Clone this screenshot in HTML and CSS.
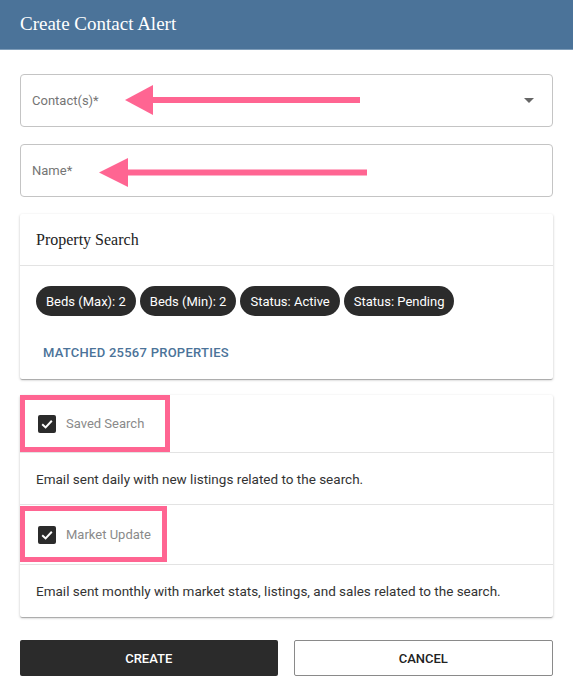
FILE: index.html
```html
<!DOCTYPE html>
<html>
<head>
<meta charset="utf-8">
<link rel="stylesheet" href="styles.css">
</head>
<body>
<header class="topbar"><h1 class="title">Create Contact Alert</h1></header>
<main class="content">
  <div class="field">
    <span class="field-label">Contact(s)*</span>
    <span class="caret"></span>
    <svg class="arrow arrow-contact" width="235" height="30" viewBox="0 0 235 30"><polygon points="0,15 28,0 28,30" fill="#ff6592"/><rect x="27" y="12" width="208" height="6" fill="#ff6592"/></svg>
  </div>
  <div class="field">
    <span class="field-label">Name*</span>
    <svg class="arrow arrow-name" width="268" height="29" viewBox="0 0 268 29"><polygon points="0,14.5 29,0 29,29" fill="#ff6592"/><rect x="28" y="11.5" width="240" height="6" fill="#ff6592"/></svg>
  </div>
  <section class="card">
    <div class="card-head">Property Search</div>
    <div class="card-body">
      <div class="chips">
        <span class="chip">Beds (Max): 2</span>
        <span class="chip">Beds (Min): 2</span>
        <span class="chip">Status: Active</span>
        <span class="chip">Status: Pending</span>
      </div>
      <div class="matched">MATCHED 25567 PROPERTIES</div>
    </div>
  </section>
  <section class="card">
    <div class="check-row">
      <span class="checkbox"><svg width="18" height="18" viewBox="0 0 18 18"><path d="M4.2 9.2 L7.6 12.4 L13.8 5.8" fill="none" stroke="#fff" stroke-width="2"/></svg></span>
      <span class="check-label">Saved Search</span>
      <span class="highlight hl-1"></span>
    </div>
    <div class="desc">Email sent daily with new listings related to the search.</div>
    <div class="check-row row-2">
      <span class="checkbox"><svg width="18" height="18" viewBox="0 0 18 18"><path d="M4.2 9.2 L7.6 12.4 L13.8 5.8" fill="none" stroke="#fff" stroke-width="2"/></svg></span>
      <span class="check-label">Market Update</span>
      <span class="highlight hl-2"></span>
    </div>
    <div class="desc last">Email sent monthly with market stats, listings, and sales related to the search.</div>
  </section>
  <div class="actions">
    <button class="btn btn-primary">CREATE</button>
    <button class="btn btn-outline">CANCEL</button>
  </div>
</main>
</body>
</html>
```

FILE: styles.css
```css
* { box-sizing: border-box; }
html, body { margin: 0; padding: 0; background: #fff; }
body { font-family: Roboto, "Liberation Sans", sans-serif; color: #333; width: 573px; }

.topbar {
  height: 50px;
  background: #4b7399;
  border-bottom: 1px solid #7f9db9;
  display: flex;
  align-items: center;
  padding-left: 20px;
}
.title {
  margin: 0;
  font-family: "Liberation Serif", "DejaVu Serif", serif;
  font-weight: normal;
  font-size: 19px;
  color: #fff;
  position: relative;
  top: -1px;
}

.content {
  padding: 24px 20px 0 20px;
  display: flex;
  flex-direction: column;
}

.field {
  position: relative;
  height: 53px;
  border: 1px solid #c4c4c4;
  border-radius: 4px;
  display: flex;
  align-items: center;
  padding: 0 11px;
  margin-bottom: 17px;
}
.field-label { font-size: 13px; color: #757575; }
.caret {
  margin-left: auto;
  margin-right: 7px;
  width: 0; height: 0;
  border-left: 5px solid transparent;
  border-right: 5px solid transparent;
  border-top: 5px solid #666;
}
.arrow { position: absolute; }
.arrow-contact { left: 104px; top: 10px; }
.arrow-name { left: 78px; top: 13px; }

.card {
  background: #fff;
  border-radius: 2px;
  box-shadow: 0 1px 3px rgba(0,0,0,0.2), 0 1px 1px rgba(0,0,0,0.14), 0 2px 1px -1px rgba(0,0,0,0.12);
  margin-bottom: 16px;
}
.card-head {
  height: 52px;
  display: flex;
  align-items: center;
  padding-left: 16px;
  font-family: "Liberation Serif", "DejaVu Serif", serif;
  font-size: 16px;
  color: #222;
  border-bottom: 1px solid #e3e3e3;
}
.card-body { padding: 20px 16px 12px 16px; }
.chips { display: flex; gap: 4px; }
.chip {
  height: 30px;
  border-radius: 15px;
  background: #2b2b2b;
  color: #fff;
  font-size: 13px;
  display: flex;
  align-items: center;
  padding: 0 10px;
}
.matched {
  margin-top: 23px;
  padding-left: 7px;
  font-size: 13px;
  font-weight: 500;
  letter-spacing: 0.02em;
  color: #4b7399;
  line-height: 28px;
}

.check-row {
  position: relative;
  height: 58px;
  display: flex;
  align-items: center;
  padding-left: 18px;
  border-bottom: 1px solid #e3e3e3;
}
.row-2 { height: 60px; }
.checkbox {
  width: 18px; height: 18px;
  background: #2b2b2b;
  border-radius: 2px;
  display: flex;
}
.check-label { margin-left: 10px; font-size: 13px; color: #8a8a8a; }
.highlight {
  position: absolute;
  border: 5px solid #ff6592;
}
.hl-1 { left: 0; top: 0; width: 150px; height: 57px; }
.hl-2 { left: 0; top: 1px; width: 147px; height: 56px; }

.desc {
  height: 52px;
  display: flex;
  align-items: center;
  padding-left: 16px;
  font-size: 13.5px;
  color: #333;
  border-bottom: 1px solid #e3e3e3;
}
.desc.last { border-bottom: none; }

.actions {
  margin-top: 7px;
  display: flex;
  gap: 16px;
}
.btn {
  flex: 1;
  height: 36px;
  border-radius: 2px;
  font-family: Roboto, "Liberation Sans", sans-serif;
  font-size: 13px;
  font-weight: 500;
}
.btn-primary { background: #2b2b2b; color: #fff; border: none; }
.btn-outline { background: #fff; color: #222; border: 1px solid #8a8a8a; }
```
